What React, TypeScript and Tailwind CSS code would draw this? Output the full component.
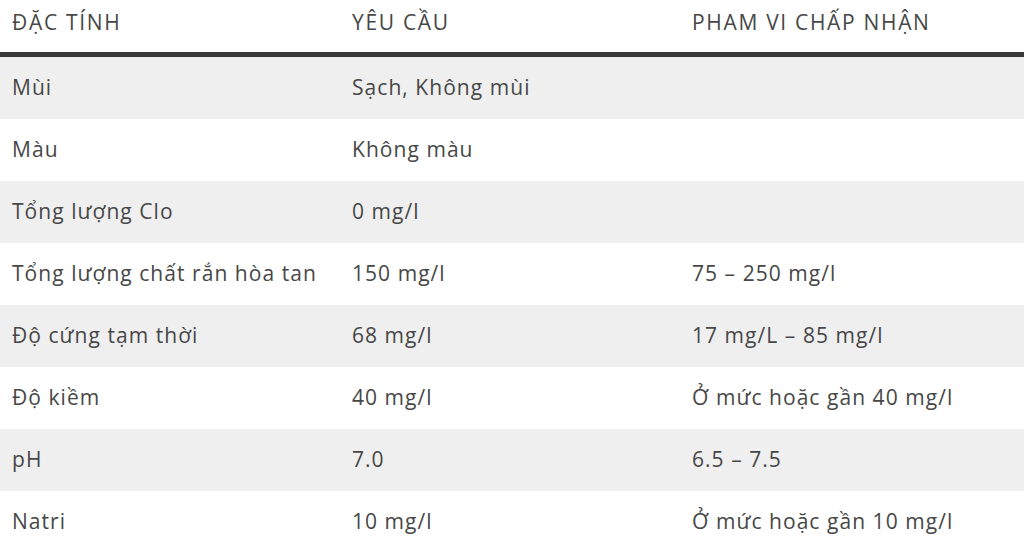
import React from "react";

const rows: [string, string, string][] = [
  ["Mùi", "Sạch, Không mùi", ""],
  ["Màu", "Không màu", ""],
  ["Tổng lượng Clo", "0 mg/l", ""],
  ["Tổng lượng chất rắn hòa tan", "150 mg/l", "75 – 250 mg/l"],
  ["Độ cứng tạm thời", "68 mg/l", "17 mg/L – 85 mg/l"],
  ["Độ kiềm", "40 mg/l", "Ở mức hoặc gần 40 mg/l"],
  ["pH", "7.0", "6.5 – 7.5"],
  ["Natri", "10 mg/l", "Ở mức hoặc gần 10 mg/l"],
];

export default function App() {
  return (
    <div
      className="w-[1024px] h-[557px] overflow-hidden bg-white text-[#474747]"
      style={{ fontFamily: '"Open Sans", "Noto Sans", sans-serif' }}
    >
      <div className="grid grid-cols-[340px_340px_344px] h-[57px] pb-[6px] items-center text-[21px] tracking-[0.08em] border-b-[5px] border-[#3a3a3a]">
        <div className="pl-3">ĐẶC TÍNH</div>
        <div className="pl-3">YÊU CẦU</div>
        <div className="pl-3">PHAM VI CHẤP NHẬN</div>
      </div>
      {rows.map((r, i) => (
        <div
          key={i}
          className={`grid grid-cols-[340px_340px_344px] h-[62px] items-center text-[21px] tracking-[0.05em] ${
            i % 2 === 0 ? "bg-[#efefef]" : "bg-white"
          }`}
        >
          <div className="pl-3">{r[0]}</div>
          <div className="pl-3">{r[1]}</div>
          <div className="pl-3">{r[2]}</div>
        </div>
      ))}
    </div>
  );
}
